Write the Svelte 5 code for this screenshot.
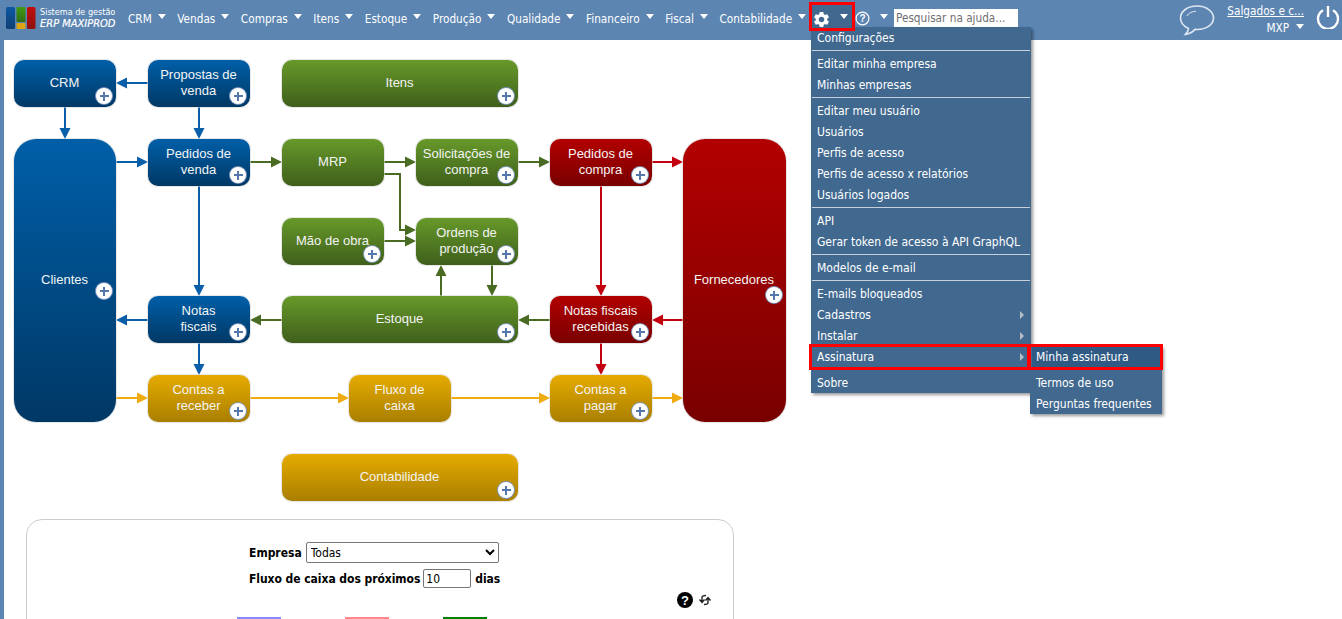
<script>
  const navItems = ['CRM','Vendas','Compras','Itens','Estoque','Produção','Qualidade','Financeiro','Fiscal','Contabilidade'];
  const menu = [
    ['Configurações'], null,
    ['Editar minha empresa'], ['Minhas empresas'], null,
    ['Editar meu usuário'], ['Usuários'], ['Perfis de acesso'], ['Perfis de acesso x relatórios'], ['Usuários logados'], null,
    ['API'], ['Gerar token de acesso à API GraphQL'], null,
    ['Modelos de e-mail'], null,
    ['E-mails bloqueados'], ['Cadastros', true], ['Instalar', true], ['Assinatura', true], null,
    ['Sobre']
  ];
  const nodes = [
    { l: ['CRM'], c: 'blue', x: 14, y: 60, w: 102, h: 47 },
    { l: ['Propostas de', 'venda'], c: 'blue', x: 148, y: 60, w: 102, h: 47 },
    { l: ['Itens'], c: 'green', x: 282, y: 60, w: 236, h: 47 },
    { l: ['Clientes'], c: 'blue', x: 14, y: 139, w: 102, h: 283, big: true },
    { l: ['Pedidos de', 'venda'], c: 'blue', x: 148, y: 139, w: 102, h: 47 },
    { l: ['MRP'], c: 'green', x: 282, y: 139, w: 102, h: 47, noplus: true },
    { l: ['Solicitações de', 'compra'], c: 'green', x: 416, y: 139, w: 102, h: 47 },
    { l: ['Pedidos de', 'compra'], c: 'red', x: 550, y: 139, w: 102, h: 47 },
    { l: ['Fornecedores'], c: 'red', x: 683, y: 139, w: 103, h: 283, big: true, low: true },
    { l: ['Mão de obra'], c: 'green', x: 282, y: 218, w: 102, h: 47 },
    { l: ['Ordens de', 'produção'], c: 'green', x: 416, y: 218, w: 102, h: 47 },
    { l: ['Notas', 'fiscais'], c: 'blue', x: 148, y: 296, w: 102, h: 47 },
    { l: ['Estoque'], c: 'green', x: 282, y: 296, w: 236, h: 47 },
    { l: ['Notas fiscais', 'recebidas'], c: 'red', x: 550, y: 296, w: 102, h: 47 },
    { l: ['Contas a', 'receber'], c: 'yellow', x: 148, y: 375, w: 102, h: 47 },
    { l: ['Fluxo de', 'caixa'], c: 'yellow', x: 349, y: 375, w: 102, h: 47, noplus: true },
    { l: ['Contas a', 'pagar'], c: 'yellow', x: 550, y: 375, w: 102, h: 47 },
    { l: ['Contabilidade'], c: 'yellow', x: 282, y: 454, w: 236, h: 47 }
  ];
  const col = { blue: '#0b5fa9', green: '#4a6b22', red: '#c2000f', yellow: '#efab12' };
  const arrows = [
    ['blue', [[148,83],[116,83]]],
    ['blue', [[65,107],[65,139]]],
    ['blue', [[199,107],[199,139]]],
    ['blue', [[116,162],[148,162]]],
    ['blue', [[199,186],[199,296]]],
    ['blue', [[148,320],[116,320]]],
    ['blue', [[199,343],[199,375]]],
    ['green', [[250,162],[282,162]]],
    ['green', [[384,162],[416,162]]],
    ['green', [[518,162],[550,162]]],
    ['green', [[384,174],[400,174],[400,230],[416,230]]],
    ['green', [[384,241],[416,241]]],
    ['green', [[441,296],[441,265]]],
    ['green', [[492,265],[492,296]]],
    ['green', [[550,320],[518,320]]],
    ['green', [[282,320],[250,320]]],
    ['red', [[652,162],[683,162]]],
    ['red', [[601,186],[601,296]]],
    ['red', [[683,320],[652,320]]],
    ['red', [[601,343],[601,375]]],
    ['yellow', [[116,398],[148,398]]],
    ['yellow', [[250,398],[349,398]]],
    ['yellow', [[451,398],[550,398]]],
    ['yellow', [[652,398],[683,398]]]
  ];
  function head(pts) {
    const [ax, ay] = pts[pts.length - 2];
    const [bx, by] = pts[pts.length - 1];
    const dx = Math.sign(bx - ax), dy = Math.sign(by - ay);
    const len = 11, hw = 5.5;
    const cx = bx - dx * len, cy = by - dy * len;
    return `${bx},${by} ${cx - dy * hw},${cy - dx * hw} ${cx + dy * hw},${cy + dx * hw}`;
  }
  function line(pts) {
    const [ax, ay] = pts[pts.length - 2];
    const [bx, by] = pts[pts.length - 1];
    const dx = Math.sign(bx - ax), dy = Math.sign(by - ay);
    return pts.slice(0, -1).concat([[bx - dx * 8, by - dy * 8]]).map(p => p.join(',')).join(' ');
  }
</script>

<div class="page">
  <header class="top">
    <div class="logo">
      <svg class="logo-mark" width="30" height="22" viewBox="0 0 30 22">
        <defs>
          <linearGradient id="lb" x1="0" y1="0" x2="0" y2="1"><stop offset="0" stop-color="#0c58a4" /><stop offset="1" stop-color="#103f72" /></linearGradient>
          <linearGradient id="lg" x1="0" y1="0" x2="0" y2="1"><stop offset="0" stop-color="#3f9a14" /><stop offset="1" stop-color="#2f6d14" /></linearGradient>
          <linearGradient id="lr" x1="0" y1="0" x2="0" y2="1"><stop offset="0" stop-color="#c00d0d" /><stop offset="1" stop-color="#8f1010" /></linearGradient>
        </defs>
        <rect x="0" y="0" width="9" height="22" rx="1.5" fill="url(#lb)" />
        <rect x="10.5" y="0" width="9" height="15" rx="1" fill="url(#lg)" />
        <rect x="10.5" y="16" width="9" height="6" rx="1" fill="#dda312" />
        <rect x="21" y="0" width="8.500" height="22" rx="1.5" fill="url(#lr)" />
      </svg>
      <div class="logo-text">
        <span class="logo-a">Sistema de gestão</span>
        <span class="logo-b">ERP MAXIPROD</span>
      </div>
    </div>
    <nav class="nav">
      {#each navItems as item}
        <span class="nav-item">{item}<i class="caret"></i></span>
      {/each}
    </nav>
    <div class="gear-tab">
      <svg width="19" height="19" viewBox="0 0 24 24" fill="#fff"><path d="M19.14 12.94c.04-.3.06-.61.06-.94 0-.32-.02-.64-.07-.94l2.03-1.58c.18-.14.23-.41.12-.61l-1.92-3.32c-.12-.22-.37-.29-.59-.22l-2.39.96c-.5-.38-1.03-.7-1.62-.94l-.36-2.54c-.04-.24-.24-.41-.48-.41h-3.84c-.24 0-.43.17-.47.41l-.36 2.54c-.59.24-1.13.57-1.62.94l-2.39-.96c-.22-.08-.47 0-.59.22L2.74 8.87c-.12.21-.08.47.12.61l2.03 1.58c-.05.3-.09.63-.09.94s.02.64.07.94l-2.03 1.58c-.18.14-.23.41-.12.61l1.92 3.32c.12.22.37.29.59.22l2.39-.96c.5.38 1.03.7 1.62.94l.36 2.54c.05.24.24.41.48.41h3.84c.24 0 .44-.17.47-.41l.36-2.54c.59-.24 1.13-.56 1.62-.94l2.39.96c.22.08.47 0 .59-.22l1.92-3.32c.12-.22.07-.47-.12-.61l-2.01-1.58zM12 15.6c-1.98 0-3.6-1.62-3.6-3.6s1.62-3.6 3.6-3.6 3.6 1.62 3.6 3.6-1.62 3.6-3.6 3.6z" /></svg>
      <i class="caret"></i>
    </div>
    <div class="help">
      <svg width="15" height="15" viewBox="0 0 15 15"><circle cx="7.5" cy="7.5" r="6.4" fill="none" stroke="#fff" stroke-width="1.2" /><text x="7.5" y="11" text-anchor="middle" class="q">?</text></svg>
      <i class="caret"></i>
    </div>
    <input class="search" placeholder="Pesquisar na ajuda..." />
    <div class="right">
      <svg class="bubble" width="36" height="32" viewBox="0 0 36 32"><path d="M18 2C8.500 2 1.500 7.300 1.500 14c0 4.600 3.200 8.300 8 10.400-.2 2.300-1.300 4.200-3 6 3.500-.5 7.200-2.400 9.600-5 .7.1 1.300.1 1.900.1 9.500 0 16.500-5 16.500-11.500S27.500 2 18 2z" fill="none" stroke="#dfe8f2" stroke-width="1.600" /><path d="M8 12c1.500-3 5-4.500 9-4.800" fill="none" stroke="#dfe8f2" stroke-width="1" /></svg>
      <div class="account">
        <span class="company">Salgados e c...</span>
        <span class="mxp">MXP<i class="caret"></i></span>
      </div>
      <svg class="power" width="24" height="24" viewBox="0 0 24 24"><path d="M7 5.200a10 10 0 1 0 10 0" fill="none" stroke="#fff" stroke-width="2.400" /><path d="M12 1v11" fill="none" stroke="#fff" stroke-width="2.400" /></svg>
    </div>
  </header>

  <main class="main">
    <section class="diagram">
      <svg class="wires" width="800" height="479" viewBox="4 40 800 479">
        {#each arrows as [c, pts]}
          <polyline points={line(pts)} fill="none" stroke={col[c]} stroke-width="2" />
          <polygon points={head(pts)} fill={col[c]} />
        {/each}
      </svg>
      {#each nodes as n}
        <div class="node {n.c}" class:big={n.big} class:low={n.low} style="left:{n.x - 4}px;top:{n.y - 40}px;width:{n.w}px;height:{n.h}px">
          <div class="label">{#each n.l as t}<span>{t}</span>{/each}</div>
          {#if !n.noplus}<i class="plus"></i>{/if}
        </div>
      {/each}
    </section>

    <section class="panel">
      <div class="form-row first">
        <label class="lbl" for="emp">Empresa</label>
        <select id="emp" class="sel"><option>Todas</option></select>
      </div>
      <div class="form-row second">
        <label class="lbl" for="days">Fluxo de caixa dos próximos</label>
        <input id="days" class="days" value="10" />
        <span class="lbl dias">dias</span>
      </div>
      <div class="tools">
        <svg width="16" height="16" viewBox="0 0 16 16"><circle cx="8" cy="8" r="8" fill="#000" /><text x="8" y="12.500" text-anchor="middle" class="q2">?</text></svg>
        <svg width="14" height="12" viewBox="0 0 14 12"><path d="M8 1.500C5 1.500 4 2 4 3.500V8M1.500 5.500 4 8.500l2.500-3M6 10.500c3 0 4-.5 4-2V4M7.500 6.500 10 3.500l2.500 3" fill="none" stroke="#222" stroke-width="1.400" /></svg>
      </div>
      <div class="bars">
        <i class="bar b1"></i><i class="bar b2"></i><i class="bar b3"></i>
      </div>
    </section>

    <div class="menu">
      {#each menu as m}
        {#if m}
          <div class="mi">{m[0]}{#if m[1]}<i class="sub-arrow"></i>{/if}</div>
        {:else}
          <div class="sep"></div>
        {/if}
      {/each}
    </div>
    <div class="submenu">
      <div class="mi active">Minha assinatura</div>
      <div class="sep"></div>
      <div class="mi">Termos de uso</div>
      <div class="mi">Perguntas frequentes</div>
    </div>
    <div class="hl hl-row"></div>
    <div class="hl hl-sub"></div>
  </main>
  <div class="hl hl-gear"></div>
</div>

<style>
  :global(html), :global(body) { margin: 0; height: 619px; overflow: hidden; background: #5c85b2; }
  .page {
    position: relative;
    width: 1342px;
    height: 619px;
    overflow: hidden;
    font-family: "DejaVu Sans Condensed", "DejaVu Sans", sans-serif;
    font-stretch: condensed;
    font-size: 11.7px;
    color: #fff;
  }
  .top { display: flex; align-items: flex-start; height: 40px; background: #5c85b2; border-top-left-radius: 5px; }
  .logo { display: flex; align-items: center; padding: 7px 0 0 6px; height: 22px; }
  .logo-mark { flex: none; }
  .logo-text { display: flex; flex-direction: column; margin-left: 4px; line-height: 12px; width: 88px; }
  .logo-a { font-size: 9px; }
  .logo-b { font-size: 11px; font-style: italic; -webkit-text-stroke: 0.2px #fff; }
  .nav { display: flex; flex: none; width: 681px; padding-top: 12px; line-height: 14px; }
  .nav-item { display: flex; align-items: flex-start; margin-right: 11.55px; white-space: nowrap; }
  .caret {
    display: inline-block;
    width: 0; height: 0;
    border-left: 4.5px solid transparent;
    border-right: 4.5px solid transparent;
    border-top: 5px solid #fff;
    margin: 2px 0 0 6px;
  }
  .gear-tab {
    display: flex; align-items: flex-start; flex: none;
    box-sizing: border-box;
    width: 46px; height: 27px;
    margin-top: 3px;
    padding: 7px 0 0 2.5px;
    background: #41698f;
  }
  .gear-tab .caret { margin: 4px 0 0 9px; }
  .help { display: flex; flex: none; padding-top: 11px; width: 39px; }
  .help .caret { margin: 3px 0 0 10px; }
  .q { font: 700 10px "Liberation Sans", sans-serif; fill: #fff; }
  .q2 { font: 700 13px "Liberation Sans", sans-serif; fill: #fff; }
  .search {
    box-sizing: border-box; width: 124px; height: 18px; margin-top: 9px; padding: 0 2px;
    border: 0; background: #fff; font: inherit; font-size: 11.7px; color: #555;
  }
  .search::placeholder { color: #6f6f6f; opacity: 1; }
  .right { display: flex; align-items: flex-start; margin-left: auto; padding-right: 2px; }
  .bubble { margin-top: 4px; margin-right: 12px; }
  .account { display: flex; flex-direction: column; align-items: flex-end; padding-top: 4px; line-height: 14px; }
  .company { text-decoration: underline; }
  .mxp { display: flex; margin-top: 3px; }
  .mxp .caret { margin-left: 7px; margin-top: 3px; }
  .power { margin-top: 5px; margin-left: 12px; }

  .main {
    position: absolute;
    left: 4px; right: 0; top: 40px; bottom: 0;
    background: #fff;
  }
  .diagram { position: relative; height: 479px; }
  .wires { position: absolute; left: 0; top: 0; }
  .node {
    position: absolute;
    box-sizing: border-box;
    border-radius: 10px;
    box-shadow: 0 0 0 1px rgba(215,215,215,.6);
    display: flex; align-items: center; justify-content: center;
    padding-right: 1px;
    font-family: "Liberation Sans", Arial, sans-serif;
    font-stretch: normal;
    font-size: 13px;
    line-height: 16px;
    color: #f4f4f4;
    text-align: center;
  }
  .node.big { border-radius: 22px; }
  .label { display: flex; flex-direction: column; margin-top: -1px; }
  .blue { background: linear-gradient(#005fa8, #003865); }
  .green { background: linear-gradient(#67992a, #3f5f1b); }
  .red { background: linear-gradient(#b20000, #790000); }
  .yellow { background: linear-gradient(#e6ab00, #a97f00); }
  .plus {
    position: absolute; right: 4px; bottom: 3px;
    width: 16px; height: 16px;
    box-sizing: border-box;
    border-radius: 50%;
    background:
      linear-gradient(#5478ad, #5478ad) center / 9px 2px no-repeat,
      linear-gradient(#5478ad, #5478ad) center / 2px 9px no-repeat,
      #fff;
    box-shadow: 0 0 0 1px #7c97bd;
  }
  .big .plus { bottom: 123px; }
  .low .plus { bottom: 119px; }
  .panel {
    position: relative;
    box-sizing: border-box;
    width: 708px; height: 200px;
    margin-left: 22px;
    border: 1px solid #ccc;
    border-radius: 16px;
    color: #000;
    font-size: 12px;
  }
  .form-row { display: flex; align-items: center; padding-left: 222px; }
  .first { padding-top: 22px; gap: 4px; }
  .second { padding-top: 6px; gap: 3px; }
  .second .lbl { letter-spacing: -0.05px; }
  .dias { margin-left: 1px; }
  .lbl { font-weight: 700; }
  .sel {
    box-sizing: border-box; width: 193px; height: 21px; padding: 0;
    font: inherit; font-size: 12px;
    border: 1px solid #767676; border-radius: 2px; background: #fff; color: #000;
  }
  .days {
    box-sizing: border-box; width: 48px; height: 19px; padding: 0 2px;
    font: inherit; font-size: 12px;
    border: 1px solid #767676; border-radius: 2px; background: #fff; color: #000;
  }
  .tools { display: flex; align-items: center; justify-content: flex-end; gap: 5px; padding: 4px 21px 0 0; }
  .bars { position: absolute; left: 210px; top: 97px; display: flex; }
  .bar { display: block; width: 44px; height: 3px; }
  .b1 { background: #8888ff; }
  .b2 { background: #ff8888; margin-left: 64px; }
  .b3 { background: #008000; margin-left: 54px; }

  .menu, .submenu {
    position: absolute;
    box-sizing: border-box;
    background: #41698f;
    box-shadow: 2px 2px 3px rgba(0,0,0,.4);
    line-height: 23px;
    font-size: 12px;
  }
  .menu { left: 807px; top: -13px; width: 220px; }
  .submenu { left: 1026px; top: 306px; width: 132px; }
  .mi { position: relative; height: 21px; padding: 0 6px; white-space: nowrap; }
  .sep { height: 1px; padding: 0; margin: 2px 1px 2px; background: #c6d1dc; }
  .sub-arrow {
    position: absolute; right: 7px; top: 7px;
    width: 0; height: 0;
    border-top: 4px solid transparent;
    border-bottom: 4px solid transparent;
    border-left: 4px solid #b7bcc2;
  }
  .active { background: #2f5a84; margin: 1px 2px 0; padding: 0 4px; height: 20px; line-height: 20px; }
  .hl { position: absolute; box-sizing: border-box; border: 3px solid #f00; pointer-events: none; }
  .hl-gear { left: 809px; top: 2px; width: 46px; height: 29px; }
  .hl-row { left: 805px; top: 304px; width: 221px; height: 26px; }
  .hl-sub { left: 1024px; top: 304px; width: 135px; height: 26px; }
</style>
